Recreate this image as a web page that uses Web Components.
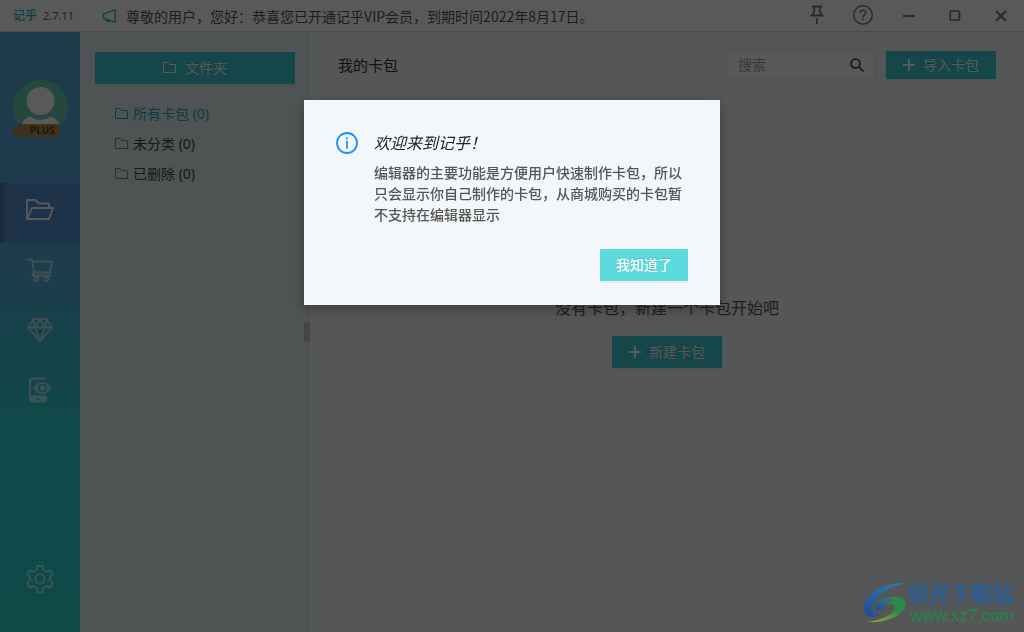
<!DOCTYPE html>
<html lang="zh-CN">
<head>
<meta charset="utf-8">
<meta name="viewport" content="width=device-width, initial-scale=1">
<title>记乎</title>
<style>
  html, body { height: 100%; margin: 0; }
  body {
    font-family: "Noto Sans", "Noto Sans CJK SC", sans-serif;
    font-size: 14px;
    line-height: 20px;
    color: #555;
    --teal: #39c8d3;
  }
</style>
</head>
<body>
<editor-app></editor-app>

<script>
const define = (name, html) => {
  const template = document.createElement('template');
  template.innerHTML = html;
  customElements.define(name, class extends HTMLElement {
    constructor() {
      super();
      this.attachShadow({ mode: 'open' }).append(template.content.cloneNode(true));
    }
  });
};

const folder = `<svg width="14" height="14" viewBox="0 0 14 14" fill="none" stroke="currentColor" aria-hidden="true"><path d="M.5 1.5h4.500l1.500 2h6v8H.5z"/></svg>`;
const plus = `<svg width="12" height="12" viewBox="0 0 12 12" stroke="currentColor" stroke-width="2" aria-hidden="true"><path d="M6 0v12M0 6h12"/></svg>`;

/* Solid action button; the icon goes in the "icon" slot. */
define('action-button', `
<style>
  :host { display: block; }
  button {
    display: flex; align-items: center; justify-content: center; gap: 8px;
    width: 100%; height: var(--height, 32px); padding: 0 16px; border: 0;
    background: var(--fill, var(--teal)); color: #fff; font: inherit;
    white-space: nowrap; text-shadow: 0 -1px 0 rgba(0,0,0,.12);
    box-shadow: 0 2px 0 rgba(0,0,0,.045); cursor: pointer;
  }
  ::slotted(svg) { flex: none; }
</style>
<button type="button"><slot name="icon"></slot><slot></slot></button>`);

define('title-bar', `
<style>
  :host { display: flex; align-items: center; height: 31px; padding: 0 11px 0 13px; background: #fff; border-bottom: 1px solid #d4d4d4; }
  .logo { color: #25b5bd; font-size: 12px; font-weight: 500; }
  .version { margin: 0 28px 0 6px; font-size: 11px; color: #666; }
  .notice { display: flex; align-items: center; gap: 9px; flex: 1; min-width: 0; white-space: nowrap; font-family: "Noto Sans CJK SC", sans-serif; }
  .notice svg { color: #25b5bd; }
  nav { display: flex; gap: 22px; padding-bottom: 2px; }
  nav button { display: grid; place-items: center; width: 24px; height: 24px; padding: 0; border: 0; background: none; color: #777; }
</style>
<span class="logo">记乎</span><span class="version">2.7.11</span>
<div class="notice">
  <svg width="15" height="14" viewBox="0 0 15 14" fill="none" stroke="currentColor" stroke-width="1.300" aria-hidden="true"><path d="M1.500 4.800 13 1v12L1.500 9.200zM4 10v2h3v-.9"/></svg>
  <span>尊敬的用户，您好：恭喜您已开通记乎VIP会员，到期时间2022年8月17日。</span>
</div>
<nav aria-label="窗口">
  <button type="button" aria-label="置顶"><svg width="14" height="20" viewBox="0 0 14 20" fill="none" stroke="currentColor" stroke-width="1.800"><path d="M2 1.500h10M4.200 2v5.200L1.500 10.500h11L9.800 7.200V2M7 13v6"/></svg></button>
  <button type="button" aria-label="帮助"><svg width="20" height="20" viewBox="0 0 20 20" fill="none" stroke="currentColor" stroke-width="1.500"><circle cx="10" cy="10" r="9.200"/><path d="M7.200 8c0-3.800 5.800-3.600 5.600-.2C12.700 9.700 10 9.800 10 12.200M10 13.800v1.700"/></svg></button>
  <button type="button" aria-label="最小化"><svg width="12" height="12" viewBox="0 0 12 12" stroke="currentColor" stroke-width="2"><path d="M0 7h12"/></svg></button>
  <button type="button" aria-label="最大化"><svg width="12" height="12" viewBox="0 0 12 12" fill="none" stroke="currentColor" stroke-width="1.700"><rect x="1.200" y="2" width="9.300" height="9" rx="1"/></svg></button>
  <button type="button" aria-label="关闭"><svg width="12" height="12" viewBox="0 0 12 12" stroke="currentColor" stroke-width="2.200"><path d="m1 2 10 10M11 2 1 12"/></svg></button>
</nav>`);

define('user-avatar', `
<style>
  :host { display: block; position: relative; width: 56px; height: 56px; }
  .face { display: block; }
  .badge { position: absolute; left: 0; bottom: -1px; display: flex; align-items: center; width: 48px; height: 14px; }
  .plate { margin-left: 7px; padding: 0 5px 0 11px; height: 13px; line-height: 13px; border-radius: 2px 2px 6px 0; background: #b4904a; color: #5a4526; font-size: 10px; font-weight: 700; }
  .crown { position: absolute; left: 0; bottom: 0; }
</style>
<svg class="face" width="56" height="56" viewBox="0 0 56 56" aria-hidden="true">
  <clipPath id="c"><circle cx="28.500" cy="27.500" r="27.500"/></clipPath>
  <circle cx="28.500" cy="27.500" r="27.500" fill="#67ceb0"/>
  <g clip-path="url(#c)" fill="#fff"><circle cx="28.500" cy="21" r="14"/><path d="M9 46q2-7 9-9.500 10.500 7 21 0 7 2.500 9 9.500v10H9z"/></g>
</svg>
<span class="badge"><span class="plate">PLUS</span>
  <svg class="crown" width="18" height="15" viewBox="0 0 18 15" aria-hidden="true"><path d="M0 3l5 4 3-7 4 6 5-2-3 10H3z" fill="#b08658"/></svg>
</span>`);

/* Entry of the rail; "active" marks the open section. */
define('rail-item', `
<style>
  :host { display: block; color: rgba(255,255,255,.6); }
  :host([active]) { color: #fff; }
  button { display: grid; place-items: center; width: 100%; height: 60px; padding: 0 4px 6px 0; border: 0; border-left: 4px solid transparent; background: none; color: inherit; }
  :host([active]) button { background: #5791d2; border-left-color: #4b7eac; }
</style>
<button type="button"><slot></slot></button>`);

define('app-rail', `
<style>
  :host { display: flex; flex-direction: column; flex: none; width: 80px; box-sizing: border-box; padding: 48px 0 20px;
    background: linear-gradient(#5aa6d6 0, #5aa6dc 34%, #2fd1d0 66%, #2cd3d2 100%); }
  user-avatar { margin: 0 0 47px 12px; }
  .bottom { margin-top: auto; }
</style>
<user-avatar></user-avatar>
<rail-item active><svg width="28" height="22" viewBox="0 0 28 22" fill="none" stroke="currentColor" stroke-width="1.800" stroke-linejoin="round" role="img" aria-label="卡包"><path d="M5 20H1V1h8l4 3.500h10V9M1 20 6 9h21l-4 11z"/></svg></rail-item>
<rail-item><svg width="26" height="24" viewBox="0 0 26 24" fill="none" stroke="currentColor" stroke-width="1.900" role="img" aria-label="商城"><path d="M0 1.500h5L7 14.500h16L25 3.500H5.500M7 14.500 5.500 17.500H24.500"/><circle cx="9.500" cy="21" r="2"/><circle cx="19.500" cy="21" r="2"/></svg></rail-item>
<rail-item><svg width="26" height="24" viewBox="0 0 26 24" fill="none" stroke="currentColor" stroke-width="1.800" stroke-linejoin="round" role="img" aria-label="会员"><path d="M6.500 1h13L25 9.500 13 23 1 9.500zM1 9.500h24M6.500 1 8 9.500 13 23l5-13.500L19.500 1M8 9.500 13 1.500l5 8"/></svg></rail-item>
<rail-item><svg width="24" height="26" viewBox="0 0 24 26" fill="none" stroke="currentColor" role="img" aria-label="预览"><path d="M18 1.500H4Q2 1.500 2 3.500V20" stroke-width="1.900"/><path fill="currentColor" stroke="none" fill-rule="evenodd" d="M5 11Q14-1 24 11 14 23 5 11zm9.500-4.500a4.500 4.500 0 1 0 .01 0z"/><circle cx="14.500" cy="11" r="2.600" fill="currentColor" stroke="none"/><path fill="currentColor" stroke="none" fill-rule="evenodd" d="M1.200 18.500H19V23q0 2.500-2.500 2.500h-13q-2.300 0-2.300-2.500zM10 20.500a1.500 1.500 0 1 0 .01 0z"/></svg></rail-item>
<rail-item class="bottom"><svg width="28" height="28" viewBox="0 0 28 28" fill="none" stroke="currentColor" stroke-width="2" stroke-linejoin="round" role="img" aria-label="设置"><circle cx="14" cy="14" r="4.800"/><path d="M11.500 1h5l1 4 3 1.700 4-1.200 2.200 4.300-2.700 2.700v3l2.700 2.700-2.200 4.300-4-1.200-3 1.700-1 4h-5l-1-4-3-1.700-4 1.200-2.200-4.300 2.700-2.700v-3L1.300 9.800l2.200-4.300 4 1.200 3-1.700z"/></svg></rail-item>`);

define('folder-panel', `
<style>
  :host { display: block; position: relative; flex: none; width: 230px; box-sizing: border-box; padding: 20px 15px; background: #e2edee; }
  ul { list-style: none; margin: 15px 0 0; padding: 0 20px; }
  a { display: flex; align-items: center; gap: 4px; height: 30px; color: #444; text-decoration: none; }
  a svg { color: #888; }
  a[aria-current], a[aria-current] svg { color: #1eb0ba; }
  .fold { position: absolute; right: 0; top: 290px; display: grid; place-items: center; width: 6px; height: 20px; padding: 0; border: 0; border-radius: 2px 0 0 2px; background: #bfc2c4; color: #fff; }
</style>
<action-button>${folder.replace('<svg', '<svg slot="icon"')}文件夹</action-button>
<ul>
  <li><a href="#all" aria-current="page">${folder}所有卡包 (0)</a></li>
  <li><a href="#none">${folder}未分类 (0)</a></li>
  <li><a href="#deleted">${folder}已删除 (0)</a></li>
</ul>
<button class="fold" type="button" aria-label="收起"><svg width="4" height="6" viewBox="0 0 4 6" fill="none" stroke="currentColor"><path d="M3.500.5 1 3l2.500 2.500"/></svg></button>`);

define('search-box', `
<style>
  :host { display: flex; align-items: center; width: 148px; height: 26px; border: 1px solid #e3e6e9; background: #fcfcfd; }
  input { flex: 1; min-width: 0; padding: 0 0 0 11px; border: 0; outline: 0; background: none; font: inherit; }
  input::placeholder { color: #a3a3a3; opacity: 1; }
  svg { margin-right: 11px; color: #333; }
</style>
<input type="text" aria-label="搜索" placeholder="搜索">
<svg width="14" height="14" viewBox="0 0 14 14" fill="none" stroke="currentColor" stroke-width="1.500" aria-hidden="true"><circle cx="5.500" cy="5.500" r="4.500"/><path d="m9 9 4.500 4.500"/></svg>`);

define('card-view', `
<style>
  :host { display: block; flex: 1; min-width: 0; background: #f4f6f9; }
  header { display: flex; align-items: center; gap: 10px; padding: 19px 28px 0; }
  h1 { flex: 1; margin: 0; font-size: 15px; font-weight: 400; color: #333; }
  header action-button { --height: 28px; }
  action-button { width: 110px; }
  .empty { display: flex; flex-direction: column; align-items: center; gap: 16px; padding-top: 217px; }
  p { margin: 0; font-size: 16px; line-height: 24px; color: #555; }
</style>
<header>
  <h1>我的卡包</h1>
  <search-box></search-box>
  <action-button>${plus.replace('<svg', '<svg slot="icon"')}导入卡包</action-button>
</header>
<section class="empty">
  <p>没有卡包，新建一个卡包开始吧</p>
  <action-button>${plus.replace('<svg', '<svg slot="icon"')}新建卡包</action-button>
</section>`);

define('info-dialog', `
<style>
  :host { position: fixed; inset: 0; display: flex; justify-content: center; align-items: flex-start; padding-top: 100px; background: rgba(0,0,0,.65); }
  .box { width: 416px; box-sizing: border-box; padding: 32px 32px 24px; background: #f3f7f9; box-shadow: 0 4px 12px rgba(0,0,0,.3); }
  .body { display: flex; align-items: flex-start; gap: 16px; }
  .body svg { flex: none; }
  h2 { margin: 0 0 8px; font-size: 16px; line-height: 22px; font-weight: 400; font-style: italic; color: #222; }
  .text { font-weight: 500; line-height: 21px; color: #555; }
  .actions { display: flex; justify-content: flex-end; margin-top: 24px; }
  action-button { width: 88px; --fill: #5edadf; font-weight: 500; }
</style>
<div class="box" role="dialog" aria-modal="true" aria-labelledby="t">
  <div class="body">
    <svg width="22" height="22" viewBox="0 0 22 22" fill="none" stroke="#1890ff" stroke-width="1.800" aria-hidden="true"><circle cx="11" cy="11" r="10"/><path d="M11 9v7.500M11 5.500v2"/></svg>
    <div><h2 id="t"><slot name="title"></slot></h2><div class="text"><slot></slot></div></div>
  </div>
  <div class="actions"><action-button>我知道了</action-button></div>
</div>`);

define('site-mark', `
<style>
  :host { position: fixed; right: 10px; bottom: 8px; display: flex; align-items: center; gap: 1px; }
  b { display: block; font-size: 21px; line-height: 22px; color: #295d96; }
  span { display: block; padding: 3px 0 0 2px; font: 17px/17px "Liberation Sans", sans-serif; color: #2b8349; -webkit-text-stroke: .3px currentColor; }
</style>
<svg width="43" height="42" viewBox="0 0 43 42" aria-hidden="true">
  <defs><linearGradient id="b" x1="0" y1="1" x2="1" y2="0"><stop stop-color="#1e4c92"/><stop offset="1" stop-color="#2c81ad"/></linearGradient>
  <linearGradient id="g" x1="0" y1="1" x2="1" y2="0"><stop stop-color="#b0ac25"/><stop offset=".6" stop-color="#2e8a48"/></linearGradient></defs>
  <path fill="url(#b)" d="M42 1C19 0 1 12 0 25c0 7 4 10 9 10l8-2C10 32 7 29 9 23 12 14 24 4 42 1z"/>
  <path fill="url(#b)" d="M12 27c0-9 11-14 18-8-7-1-10 1-10 5 0 4-7 7-8 3z"/>
  <path fill="url(#g)" d="M22 16c9-3 19-1 20 6 0 9-16 19-38 18 14-2 26-8 27-14 0-3-3-5-9-4 3-3 7-4 9-3-2-2-5-3-9-3z"/>
</svg>
<div><b>极光下载站</b><span>www.xz7.com</span></div>`);

define('editor-app', `
<style>
  :host { display: flex; flex-direction: column; min-height: 100%; }
  main { display: flex; flex: 1; }
</style>
<title-bar></title-bar>
<main><app-rail></app-rail><folder-panel></folder-panel><card-view></card-view></main>
<info-dialog><span slot="title">欢迎来到记乎！</span>编辑器的主要功能是方便用户快速制作卡包，所以只会显示你自己制作的卡包，从商城购买的卡包暂不支持在编辑器显示</info-dialog>
<site-mark></site-mark>`);
</script>
</body>
</html>
